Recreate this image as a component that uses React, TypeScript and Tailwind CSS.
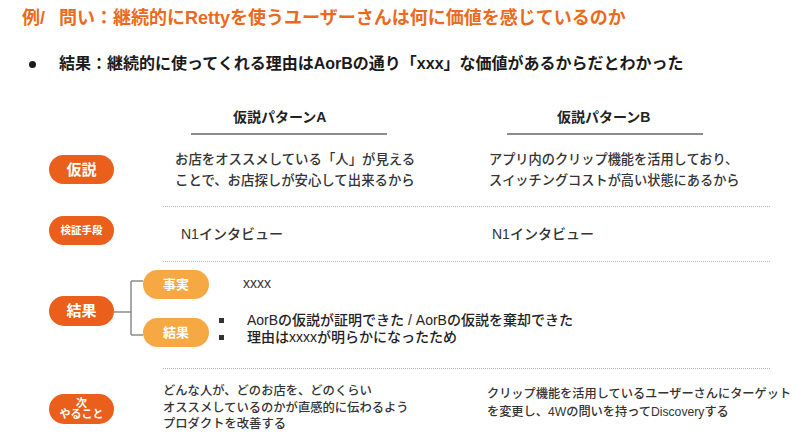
import React from "react";

const font = { fontFamily: '"Liberation Sans", "Noto Sans CJK JP", sans-serif' };

function Pill({ children, className = "" }: { children: React.ReactNode; className?: string }) {
  return (
    <div
      className={`flex items-center justify-center rounded-full text-white font-bold leading-none text-center ${className}`}
    >
      {children}
    </div>
  );
}

function Dotted() {
  return <div className="ml-[163px] w-[607px] border-t border-dotted border-[#b5b5b5]" />;
}

export default function App() {
  return (
    <div className="w-[800px] h-[440px] bg-white overflow-hidden text-[#333]" style={font}>
      {/* Title */}
      <div className="pl-[22px] pt-[6px] text-[18px] leading-[24px] font-bold text-[#ec6a20] whitespace-nowrap">
        <span>例/</span>
        <span className="ml-[14px]">問い：継続的にRettyを使うユーザーさんは何に価値を感じているのか</span>
      </div>

      {/* Bullet line */}
      <div className="mt-[23px] flex items-center pl-[29px] h-[22px]">
        <div className="w-[7px] h-[7px] rounded-full bg-[#1a1a1a]" />
        <div className="ml-[23px] text-[16px] leading-[22px] font-bold text-[#1a1a1a] whitespace-nowrap">
          結果：継続的に使ってくれる理由はAorBの通り「xxx」な価値があるからだとわかった
        </div>
      </div>

      {/* Column headers */}
      <div className="mt-[32px] flex">
        <div className="ml-[191px] w-[196px]">
          <div className="pl-[42px] text-[14px] leading-[20px] font-bold text-[#222] whitespace-nowrap">仮説パターンA</div>
          <div className="mt-[6px] h-[1.5px] bg-[#8c8c8c]" />
        </div>
        <div className="ml-[120px] w-[196px]">
          <div className="pl-[50px] text-[14px] leading-[20px] font-bold text-[#222] whitespace-nowrap">仮説パターンB</div>
          <div className="mt-[6px] h-[1.5px] bg-[#8c8c8c]" />
        </div>
      </div>

      {/* Row 1: 仮説 */}
      <div className="flex h-[71px]">
        <div className="w-[163px] pl-[49px] pt-[20px]">
          <Pill className="w-[65px] h-[29px] bg-[#e95f1b] text-[15px]">仮説</Pill>
        </div>
        <div className="w-[324px] pl-[12px] pt-[14px] text-[13.4px] leading-[21px] font-medium whitespace-nowrap">
          <div>お店をオススメしている「人」が見える</div>
          <div>ことで、お店探しが安心して出来るから</div>
        </div>
        <div className="pl-[2px] pt-[14px] text-[13.2px] leading-[21px] font-medium whitespace-nowrap">
          <div>アプリ内のクリップ機能を活用しており、</div>
          <div>スイッチングコストが高い状態にあるから</div>
        </div>
      </div>

      <Dotted />

      {/* Row 2: 検証手段 */}
      <div className="flex h-[54px]">
        <div className="w-[163px] pl-[49px] pt-[9px]">
          <Pill className="w-[65px] h-[29px] bg-[#e95f1b] text-[10.5px]">検証手段</Pill>
        </div>
        <div className="w-[324px] pl-[18px] pt-[17px] text-[14px] leading-[20px] font-medium whitespace-nowrap">
          N1インタビュー
        </div>
        <div className="pl-[5px] pt-[17px] text-[14px] leading-[20px] font-medium whitespace-nowrap">
          N1インタビュー
        </div>
      </div>

      <Dotted />

      {/* Row 3: 結果 */}
      <div className="flex h-[106px]">
        <div className="pl-[49px] pt-[34px]">
          <Pill className="w-[65px] h-[30px] bg-[#e95f1b] text-[15px]">結果</Pill>
        </div>
        <svg width="29" height="106" viewBox="0 0 29 106" className="shrink-0">
          <path d="M0 50 H17 M17 19 V73 M17 19 H29 M17 73 H29" fill="none" stroke="#8c8c8c" strokeWidth="1.5" />
        </svg>
        <div className="flex flex-col pt-[8px] gap-[19px]">
          <Pill className="w-[66px] h-[29px] bg-[#f6a843] text-[13px]">事実</Pill>
          <Pill className="w-[66px] h-[29px] bg-[#f6a843] text-[13px]">結果</Pill>
        </div>
        <div className="flex flex-col">
          <div className="ml-[34px] mt-[11px] text-[14px] leading-[20px] font-medium">xxxx</div>
          <div className="ml-[10px] mt-[19.5px] text-[14px] leading-[17px] font-medium text-[#222] whitespace-nowrap">
            <div className="flex items-center">
              <div className="w-[5px] h-[5px] bg-[#333]" />
              <div className="ml-[23px]">AorBの仮説が証明できた / AorBの仮説を棄却できた</div>
            </div>
            <div className="flex items-center">
              <div className="w-[5px] h-[5px] bg-[#333]" />
              <div className="ml-[23px]">理由はxxxxが明らかになったため</div>
            </div>
          </div>
        </div>
      </div>

      <Dotted />

      {/* Row 4: 次やること */}
      <div className="flex">
        <div className="w-[163px] pl-[49px] pt-[25px]">
          <Pill className="w-[65px] h-[30px] bg-[#e95f1b] text-[11px] flex-col leading-[12px]">
            <span>次</span>
            <span>やること</span>
          </Pill>
        </div>
        <div className="w-[324px] pt-[14.5px] text-[12.3px] leading-[16.5px] font-medium whitespace-nowrap">
          <div>どんな人が、どのお店を、どのくらい</div>
          <div>オススメしているのかが直感的に伝わるよう</div>
          <div>プロダクトを改善する</div>
        </div>
        <div className="pt-[16px] text-[12.2px] leading-[18px] font-medium whitespace-nowrap">
          <div>クリップ機能を活用しているユーザーさんにターゲット</div>
          <div>を変更し、4Wの問いを持ってDiscoveryする</div>
        </div>
      </div>
    </div>
  );
}
